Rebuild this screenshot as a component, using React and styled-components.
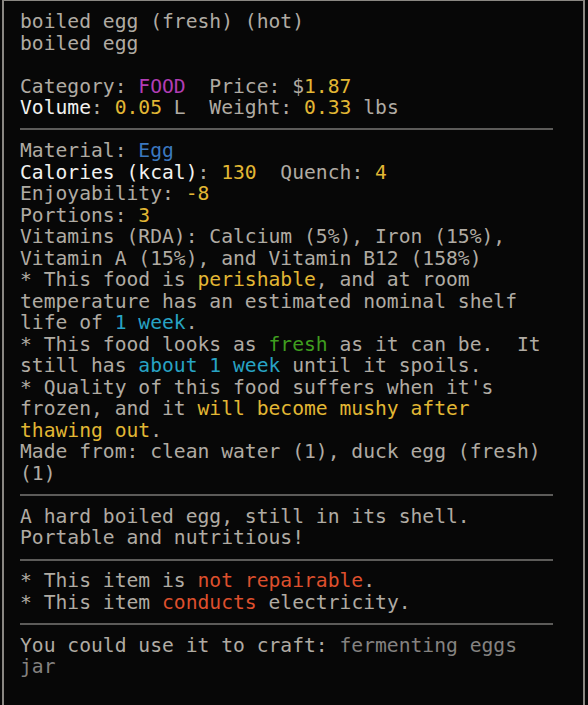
import React from "react";
import styled, { createGlobalStyle } from "styled-components";

const GlobalStyle = createGlobalStyle`
    html, body {
        margin: 0;
        padding: 0;
        background: #070707;
    }
`;

const colors = {
    base: "#b0aba3",
    white: "#f2f2f0",
    yellow: "#e2b734",
    magenta: "#b23db4",
    blue: "#3b78bf",
    cyan: "#27a3c4",
    green: "#3f9e1f",
    red: "#dd4f2d",
    gray: "#848280",
};

const Screen = styled.div`
    width: 588px;
    height: 705px;
    overflow: hidden;
    background: #070707;
    padding-left: 2px;
    box-sizing: border-box;
`;

const InfoPanel = styled.div`
    width: 583px;
    height: 705px;
    box-sizing: border-box;
    border-top: 1px solid #8a8782;
    border-left: 2px solid #8a8782;
    border-right: 2px solid #8a8782;
    padding: 10px 0 0 16px;
    font-family: "DejaVu Sans Mono", "Liberation Mono", monospace;
    font-size: 19.67px;
    color: ${colors.base};
`;

const Line = styled.div`
    height: 21.53px;
    line-height: 21.53px;
    white-space: pre;
`;

const Rule = styled.div`
    height: 21.53px;
    width: 533px;
    display: flex;
    align-items: center;

    &::after {
        content: "";
        display: block;
        width: 100%;
        height: 2px;
        background: #5c5b59;
    }
`;

const Tone = styled.span`
    color: ${(p) => colors[p.$c] || colors.base};
`;

export default function App() {
    return (
        <Screen>
            <GlobalStyle />
            <InfoPanel>
                <Line>boiled egg (fresh) (hot)</Line>
                <Line>boiled egg</Line>
                <Line> </Line>
                <Line>
                    Category: <Tone $c="magenta">FOOD</Tone>  Price: $<Tone $c="yellow">1.87</Tone>
                </Line>
                <Line>
                    <Tone $c="white">Volume</Tone>: <Tone $c="yellow">0.05</Tone> L  Weight: <Tone $c="yellow">0.33</Tone> lbs
                </Line>
                <Rule />
                <Line>
                    Material: <Tone $c="blue">Egg</Tone>
                </Line>
                <Line>
                    <Tone $c="white">Calories (kcal)</Tone>: <Tone $c="yellow">130</Tone>  Quench: <Tone $c="yellow">4</Tone>
                </Line>
                <Line>
                    Enjoyability: <Tone $c="yellow">-8</Tone>
                </Line>
                <Line>
                    Portions: <Tone $c="yellow">3</Tone>
                </Line>
                <Line>Vitamins (RDA): Calcium (5%), Iron (15%),</Line>
                <Line>Vitamin A (15%), and Vitamin B12 (158%)</Line>
                <Line>
                    * This food is <Tone $c="yellow">perishable</Tone>, and at room
                </Line>
                <Line>temperature has an estimated nominal shelf</Line>
                <Line>
                    life of <Tone $c="cyan">1 week</Tone>.
                </Line>
                <Line>
                    * This food looks as <Tone $c="green">fresh</Tone> as it can be.  It
                </Line>
                <Line>
                    still has <Tone $c="cyan">about 1 week</Tone> until it spoils.
                </Line>
                <Line>* Quality of this food suffers when it's</Line>
                <Line>
                    frozen, and it <Tone $c="yellow">will become mushy after</Tone>
                </Line>
                <Line>
                    <Tone $c="yellow">thawing out</Tone>.
                </Line>
                <Line>Made from: clean water (1), duck egg (fresh)</Line>
                <Line>(1)</Line>
                <Rule />
                <Line>A hard boiled egg, still in its shell.</Line>
                <Line>Portable and nutritious!</Line>
                <Rule />
                <Line>
                    * This item is <Tone $c="red">not repairable</Tone>.
                </Line>
                <Line>
                    * This item <Tone $c="red">conducts</Tone> electricity.
                </Line>
                <Rule />
                <Line>
                    You could use it to craft: <Tone $c="gray">fermenting eggs</Tone>
                </Line>
                <Line>
                    <Tone $c="gray">jar</Tone>
                </Line>
            </InfoPanel>
        </Screen>
    );
}
